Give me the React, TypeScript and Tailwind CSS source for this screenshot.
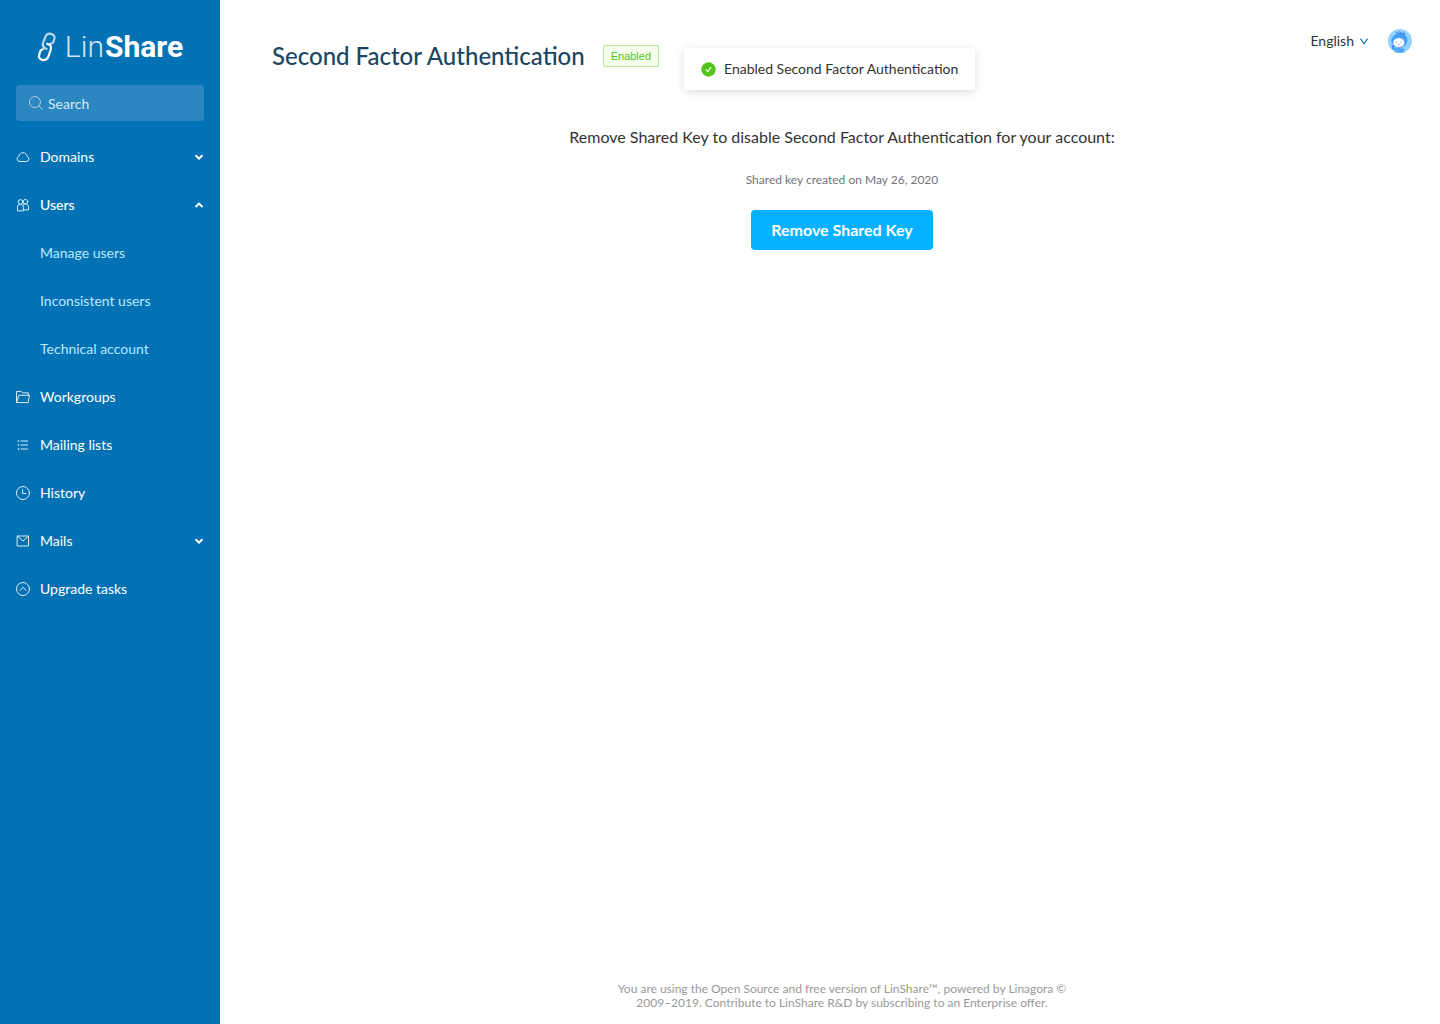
import type { ReactNode } from "react";

const stroke = {
  width: 14,
  height: 14,
  viewBox: "0 0 14 14",
  fill: "none",
  stroke: "currentColor",
  strokeWidth: 1,
  strokeLinejoin: "round" as const,
  strokeLinecap: "round" as const,
  className: "shrink-0",
  "aria-hidden": true,
};

const CloudIcon = () => (
  <svg {...stroke}>
    <path d="M3.7 11.500h6.600a2.600 2.600 0 0 0 1-5C10.600 4.100 9 2.700 7 2.700S3.400 4.100 2.700 6.500a2.600 2.600 0 0 0 1 5Z" />
  </svg>
);

const UsersIcon = () => (
  <svg {...stroke}>
    <circle cx="4.500" cy="3.900" r="2.300" />
    <circle cx="9.500" cy="3.700" r="2.300" />
    <path d="M1.500 12.500V9.300c0-2 1.200-3.100 2.900-3.100s2.900 1.100 2.900 3.100v3.200Z" />
    <path d="M7.400 11.900h5.100V8.900c0-1.900-1.200-2.900-3.100-2.900-1 0-1.700.3-2.200.8" />
  </svg>
);

const FolderIcon = () => (
  <svg {...stroke}>
    <path d="M12.300 5.300V2.900H6.600L5 1.400H.5v11.200h11.600l1.400-7.300H2.700L.8 12.500" />
  </svg>
);

const ListIcon = () => (
  <svg {...stroke} strokeLinecap="butt">
    <path d="M4.500 3H12M4.500 7H12M4.500 11H12" />
    <path d="M1.800 3h1.400M1.800 7h1.400M1.800 11h1.400" strokeWidth="1.400" />
  </svg>
);

const ClockIcon = () => (
  <svg {...stroke}>
    <circle cx="7" cy="7" r="6.500" />
    <path d="M6.600 3.500v4h3.400" />
  </svg>
);

const MailIcon = () => (
  <svg {...stroke}>
    <path d="M1.500 2h11v10h-11ZM1.700 2.300 7 7l5.300-4.700" />
  </svg>
);

const UpCircleIcon = () => (
  <svg {...stroke}>
    <circle cx="7" cy="7" r="6.500" />
    <path d="M4.100 8.400 7 5.200l2.900 3.200" />
  </svg>
);

const SearchIcon = () => (
  <svg {...stroke}>
    <circle cx="6" cy="6" r="5.500" />
    <path d="m10 10 3.600 3.600" />
  </svg>
);

const Caret = ({ up = false }: { up?: boolean }) => (
  <svg width="10" height="10" viewBox="0 0 10 10" fill="none" stroke="currentColor" strokeWidth="2" aria-hidden="true">
    <path d={up ? "M1.500 7 5 3.600 8.500 7" : "M1.500 3.200 5 6.600 8.500 3.200"} />
  </svg>
);

type Item = {
  label: string;
  icon: ReactNode;
  open?: boolean;
  children?: string[];
};

const items: Item[] = [
  { label: "Domains", icon: <CloudIcon />, open: false },
  {
    label: "Users",
    icon: <UsersIcon />,
    open: true,
    children: ["Manage users", "Inconsistent users", "Technical account"],
  },
  { label: "Workgroups", icon: <FolderIcon /> },
  { label: "Mailing lists", icon: <ListIcon /> },
  { label: "History", icon: <ClockIcon /> },
  { label: "Mails", icon: <MailIcon />, open: false },
  { label: "Upgrade tasks", icon: <UpCircleIcon /> },
];

const Logo = () => (
  <a href="#" aria-label="LinShare" className="flex h-9 items-center justify-center gap-2 text-white">
    <svg width="20" height="30" viewBox="0 0 20 30" fill="none" strokeWidth="2.200" strokeLinecap="round" aria-hidden="true">
      <path
        stroke="#b9d7ea"
        d="M9.500 17C7 16 5 14 6.100 10.800L8.200 5.200C9.200 2.600 11.200 1.300 13.800 1.800c2.900.5 4.300 2.700 3.500 5.200L16.500 9.600c-.4 1.200-1.300 2-2.700 2"
      />
      <path
        stroke="#fff"
        d="M10.200 11.800c3.200.5 4.500 2.900 3.600 5.700l-2.400 7c-.9 2.500-2.900 3.900-5.600 3.500-2.900-.5-4.500-2.700-3.700-5.200l1.200-3.600c.4-1.200 1.200-1.900 2.500-1.900"
      />
    </svg>
    <span className="font-['Roboto',sans-serif] text-[30px] leading-9">
      <span className="font-light text-[#d3e6f2]">Lin</span>
      <span className="ml-px font-bold">Share</span>
    </span>
  </a>
);

const Avatar = () => (
  <svg width="24" height="24" viewBox="0 0 24 24" aria-hidden="true">
    <defs>
      <clipPath id="avatar-clip">
        <circle cx="12" cy="12" r="12" />
      </clipPath>
    </defs>
    <g clipPath="url(#avatar-clip)">
      <rect width="24" height="24" fill="#95d0fe" />
      <path
        d="M3.500 13C3 9 5.500 6 9 5L7.600 3l3.600 1.400L11.500 2.600l2.200 1.900 2.600-.6.4 2c2.600 1.600 3.200 4.600 2.200 7.600L17 17l-10.500 1Z"
        fill="#3fa0fa"
      />
      <path d="M7.600 3 11 4.500M11.500 2.500l2.200 2 2.600-.6.300 2" fill="none" stroke="#3a6fd0" strokeWidth=".7" />
      <path d="M7 19 14.500 18 17 24H6.500Z" fill="#55aefb" />
      <path d="M3.500 15.500 6 17l1.500 5L4 20Z" fill="#3fa0fa" />
      <ellipse cx="10.800" cy="13.600" rx="5.900" ry="4.800" fill="#fff" stroke="#4a80d8" strokeWidth=".5" />
      <path d="M8.300 12.600v1.200M13.200 12.600v1.200M10 15.400q.8.6 1.600 0" fill="none" stroke="#5a7fd0" strokeWidth=".8" />
      <path d="m10 19.500 2.500 2 4-1.500M4 17.500l2.500 2" fill="none" stroke="#3f79dc" strokeWidth=".7" />
    </g>
  </svg>
);

function Sidebar() {
  return (
    <aside className="flex w-[220px] shrink-0 flex-col bg-[#0372b5] text-sm text-white">
      <div className="px-4 pt-[29px]">
        <Logo />
        <label className="mt-5 flex h-9 items-center gap-[5px] rounded bg-[#2c87c0] px-[13px] text-[#a9cfe6]">
          <SearchIcon />
          <input
            type="text"
            aria-label="Search"
            placeholder="Search"
            className="w-full min-w-0 bg-transparent pt-0.5 text-[#d5e7f2] outline-none placeholder:text-[#d5e7f2]"
          />
        </label>
      </div>
      <nav className="mt-3">
        <ul>
          {items.map((item) => (
            <li key={item.label}>
              <button
                type="button"
                aria-expanded={item.open}
                className={`flex h-12 w-full items-center gap-2.5 px-4 text-left ${item.open ? "font-medium" : ""}`}
              >
                <span className="text-[#dcebf5]">{item.icon}</span>
                <span className="flex-1">{item.label}</span>
                {item.open !== undefined && <Caret up={item.open} />}
              </button>
              {item.children && (
                <ul>
                  {item.children.map((child) => (
                    <li key={child}>
                      <a href="#" className="flex h-12 items-center pl-10 text-[#bae7ff]">
                        {child}
                      </a>
                    </li>
                  ))}
                </ul>
              )}
            </li>
          ))}
        </ul>
      </nav>
    </aside>
  );
}

export default function App() {
  return (
    <div className="flex min-h-screen bg-white font-['Lato',sans-serif] text-[#333333]">
      <Sidebar />
      <div className="flex min-w-0 flex-1 flex-col">
        <header className="flex items-start justify-between pt-7 pr-7 pl-[52px]">
          <div className="flex items-center gap-[18px] pt-3">
            <h1 className="text-2xl leading-8 font-medium text-[#1c4561]">Second Factor Authentication</h1>
            <span className="rounded-xs border border-[#b7eb8f] bg-[#f6ffed] px-[7px] font-['Liberation_Sans',sans-serif] text-[11px] leading-5 text-[#52c41a]">
              Enabled
            </span>
          </div>
          <div className="flex items-center gap-5 pt-px">
            <button type="button" className="flex items-center gap-1.5 text-sm">
              English
              <svg width="8" height="8" viewBox="0 0 8 8" fill="none" stroke="#0372b5" strokeWidth="1.100" aria-hidden="true">
                <path d="M.4 1.600 4 6.800l3.600-5.200" />
              </svg>
            </button>
            <button type="button" aria-label="Account">
              <Avatar />
            </button>
          </div>
        </header>

        <main className="flex flex-1 flex-col items-center pt-[53px] pl-6">
          <p className="text-base leading-6">
            Remove Shared Key to disable Second Factor Authentication for your account:
          </p>
          <p className="mt-[21px] text-xs leading-5 text-[#737373]">Shared key created on May 26, 2020</p>
          <button type="button" className="mt-5 h-10 rounded bg-[#07b1ff] px-5 text-base font-bold text-white">
            Remove Shared Key
          </button>
        </main>

        <footer className="flex justify-center pb-3.5 pl-6">
          <p className="max-w-[460px] text-center text-xs leading-[14px] text-[#999999]">
            You are using the Open Source and free version of LinShare™, powered by Linagora © 2009–2019. Contribute to
            LinShare R&amp;D by subscribing to an Enterprise offer.
          </p>
        </footer>
      </div>

      <div
        role="status"
        className="absolute top-12 left-[684px] flex items-center gap-2 rounded-xs bg-white px-[17px] py-2.5 text-sm leading-[22px] shadow-[0_2px_8px_rgba(0,0,0,0.15)]"
      >
        <svg width="15" height="15" viewBox="0 0 15 15" aria-hidden="true">
          <circle cx="7.500" cy="7.500" r="7.200" fill="#52c41a" />
          <path d="m4.800 7.600 1.900 2 3.300-4.400" fill="none" stroke="#fff" strokeWidth="1.200" />
        </svg>
        Enabled Second Factor Authentication
      </div>
    </div>
  );
}
